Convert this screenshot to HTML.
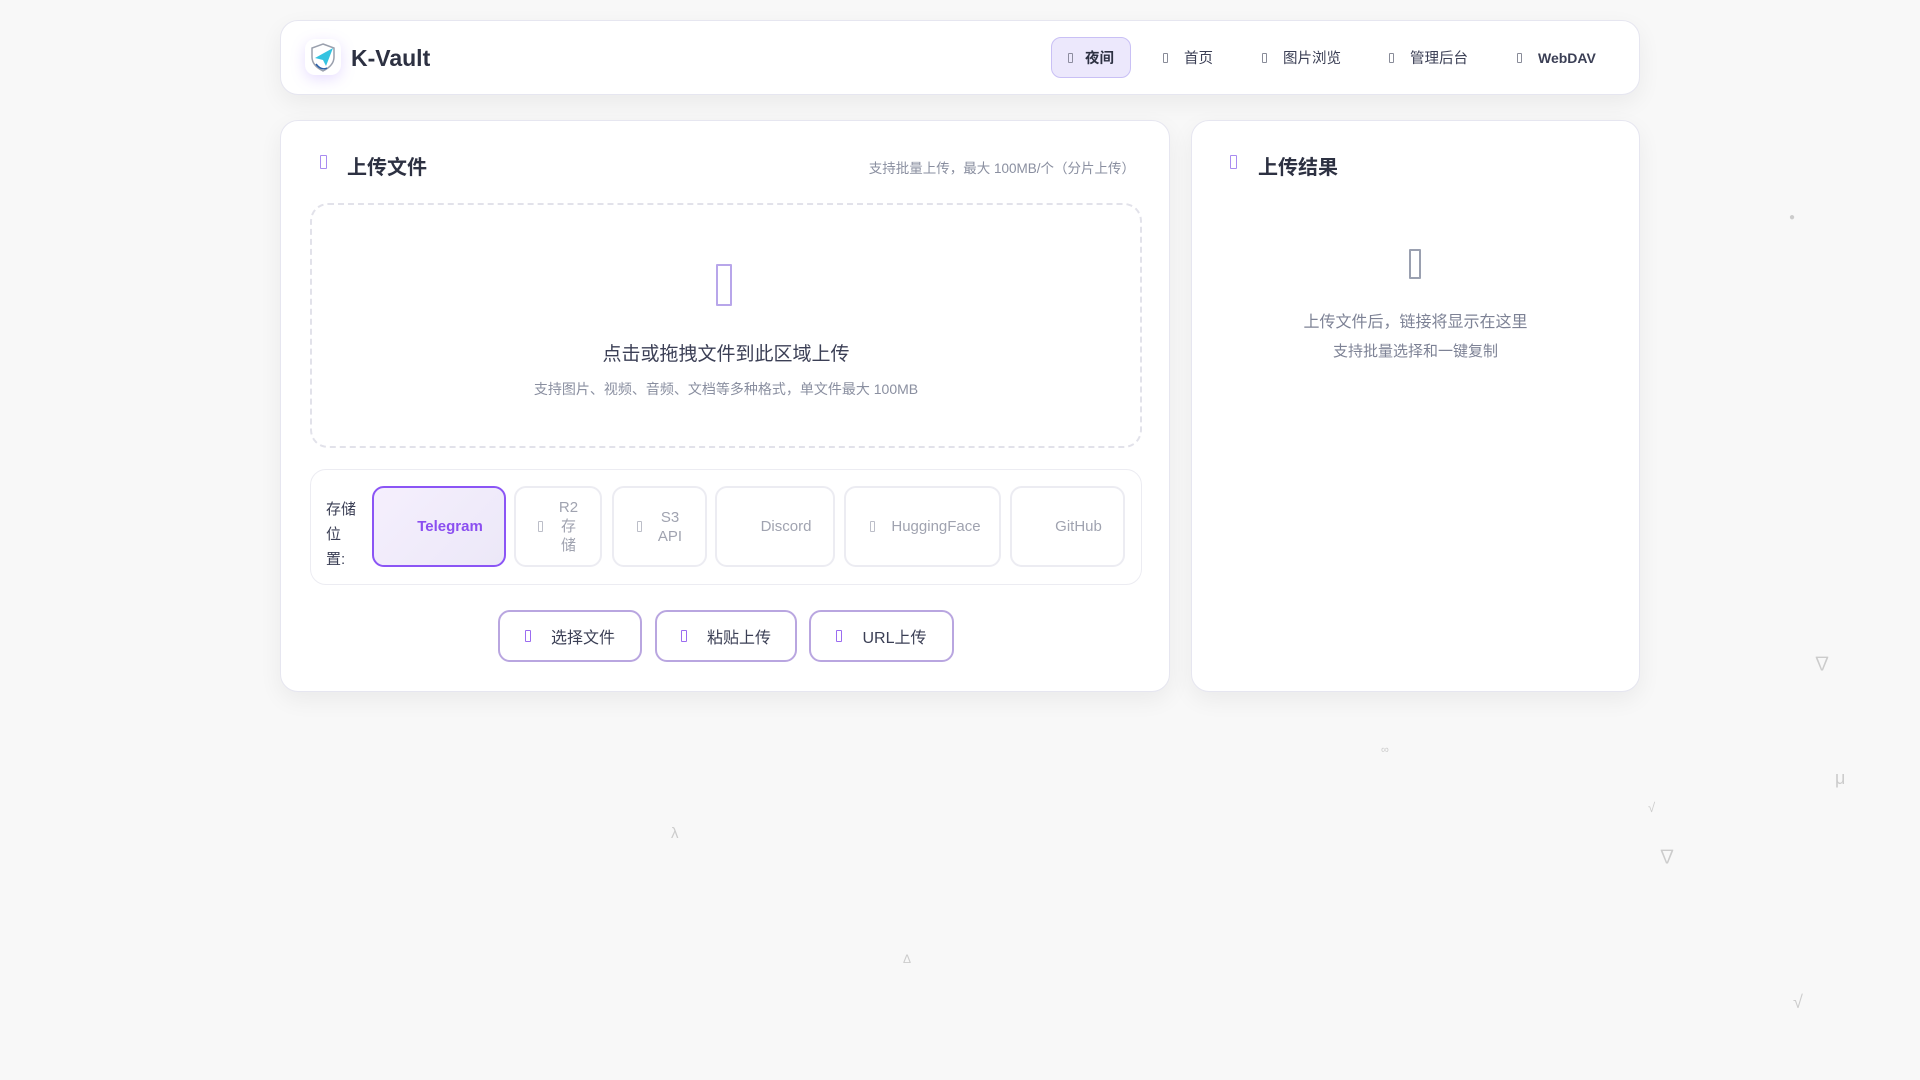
<!DOCTYPE html>
<html><head><meta charset="utf-8"><style>
*{box-sizing:border-box;margin:0;padding:0}
body{width:1920px;height:1080px;background:#f8f8f8;font-family:"Liberation Sans","Noto Sans CJK SC",sans-serif;position:relative;overflow:hidden;color:#2d3142}
.abs{position:absolute}
.card{position:absolute;background:#fff;border:1px solid #e6e6f0;border-radius:18px;box-shadow:0 8px 24px rgba(0,0,0,0.06)}
.tofu{display:inline-block;border:1.5px solid currentColor;border-radius:1px}
.nav{position:absolute;top:37px;height:41px;display:flex;align-items:center;font-size:14.5px;color:#3b3f55}
.nav .tofu{width:5px;height:10px;margin-right:16px;opacity:.6}
.sb{position:absolute;top:486px;height:81px;border:2px solid #ececf2;border-radius:12px;display:flex;align-items:center;justify-content:center;color:#a0a3b0;font-size:15px;text-align:center;line-height:19px}
.sb .tofu{width:5px;height:11px;margin-right:16px;opacity:.7}
.ab{position:absolute;top:610px;height:52px;border:2px solid #b9a6e0;border-radius:12px;display:flex;align-items:center;justify-content:center;font-size:16px;color:#3b3f55;background:#fff}
.ab .tofu{width:6px;height:12px;color:#9b6cf0;margin-right:20px}
.sym{position:absolute;color:#ccc;font-size:18px}
</style></head><body>
<div class="card" style="left:280px;top:20px;width:1360px;height:75px"></div>
<div class="abs" style="left:305px;top:39px;width:36px;height:36px;border-radius:10px;box-shadow:0 4px 14px rgba(160,120,255,.25);background:#fff">
<svg width="36" height="36" viewBox="0 0 36 36"><path d="M18 5 L29 9 V18 C29 25 24 29 18 32 C12 29 7 25 7 18 V9 Z" fill="none" stroke="#9aa0ad" stroke-width="1.5"/><path d="M10 19 L28 9 L21 27 L18 21 Z" fill="#35c3e0"/><path d="M11 25 C14 29 18 31 22 29" fill="none" stroke="#2a5fa8" stroke-width="1.5"/></svg></div>
<div class="abs" style="left:351px;top:45px;font-size:23px;font-weight:bold;color:#2d3142">K-Vault</div>
<div class="nav" style="left:1051px;width:80px;background:#ece8fc;border:1.5px solid #c9c0f5;border-radius:10px;justify-content:center;font-weight:bold;color:#2d3142"><span class="tofu" style="width:5px;height:10px;margin-right:12px;opacity:.5"></span>夜间</div>
<div class="nav" style="left:1163px"><span class="tofu"></span>首页</div>
<div class="nav" style="left:1262px"><span class="tofu"></span>图片浏览</div>
<div class="nav" style="left:1389px"><span class="tofu"></span>管理后台</div>
<div class="nav" style="left:1517px;font-size:14px;font-weight:bold"><span class="tofu"></span>WebDAV</div>

<div class="card" style="left:280px;top:120px;width:890px;height:572px"></div>
<span class="tofu abs" style="left:320px;top:155px;width:7px;height:14px;color:#a98cf0"></span>
<div class="abs" style="left:347px;top:151px;font-size:20px;font-weight:bold">上传文件</div>
<div class="abs" style="right:785px;top:157px;font-size:13.5px;color:#8a8fa0">支持批量上传，最大 100MB/个（分片上传）</div>
<div class="abs" style="left:310px;top:203px;width:832px;height:245px;border:2px dashed #e2e2ea;border-radius:18px"></div>
<span class="tofu abs" style="left:716px;top:264px;width:16px;height:42px;color:#b8a6ea;border-width:2px"></span>
<div class="abs" style="left:310px;width:832px;top:339px;text-align:center;font-size:19px;color:#3b3f55">点击或拖拽文件到此区域上传</div>
<div class="abs" style="left:310px;width:832px;top:379px;text-align:center;font-size:14px;color:#8a8fa0">支持图片、视频、音频、文档等多种格式，单文件最大 100MB</div>
<div class="abs" style="left:310px;top:469px;width:832px;height:116px;border:1.5px solid #ececf2;border-radius:16px;background:#fff"></div>
<div class="abs" style="left:326px;top:497px;font-size:15px;line-height:25px;width:32px;color:#3b3f55">存储位置:</div>
<div class="sb" style="left:372px;width:134px;padding-left:22px;border-color:#8b55f5;background:linear-gradient(135deg,#f5effd,#ece8f8);color:#8b4ff0;font-weight:bold">Telegram</div>
<div class="sb" style="left:514px;width:88px"><span class="tofu"></span>R2<br>存<br>储</div>
<div class="sb" style="left:612px;width:95px"><span class="tofu"></span>S3<br>API</div>
<div class="sb" style="left:715px;width:120px;padding-left:22px">Discord</div>
<div class="sb" style="left:844px;width:157px;padding-left:6px"><span class="tofu"></span>HuggingFace</div>
<div class="sb" style="left:1010px;width:115px;padding-left:22px">GitHub</div>
<div class="ab" style="left:498px;width:144px"><span class="tofu"></span>选择文件</div>
<div class="ab" style="left:655px;width:142px"><span class="tofu"></span>粘贴上传</div>
<div class="ab" style="left:809px;width:145px"><span class="tofu"></span>URL上传</div>

<div class="card" style="left:1191px;top:120px;width:449px;height:572px"></div>
<span class="tofu abs" style="left:1230px;top:155px;width:7px;height:14px;color:#a98cf0"></span>
<div class="abs" style="left:1258px;top:151px;font-size:20px;font-weight:bold">上传结果</div>
<span class="tofu abs" style="left:1409px;top:249px;width:12px;height:30px;color:#9aa0b0;border-width:2px"></span>
<div class="abs" style="left:1191px;width:449px;top:308px;text-align:center;font-size:16px;color:#7d8295">上传文件后，链接将显示在这里</div>
<div class="abs" style="left:1191px;width:449px;top:340px;text-align:center;font-size:15px;color:#7d8295">支持批量选择和一键复制</div>

<div class="sym" style="left:1813px;top:650px">∇</div>
<div class="sym" style="left:1658px;top:843px">∇</div>
<div class="sym" style="left:1835px;top:768px">μ</div>
<div class="sym" style="left:1648px;top:800px;font-size:13px">√</div>
<div class="sym" style="left:1793px;top:992px">√</div>
<div class="sym" style="left:671px;top:825px;font-size:15px">λ</div>
<div class="sym" style="left:903px;top:952px;font-size:12px">Δ</div>
<div class="sym" style="left:1381px;top:744px;font-size:11px">∞</div>
<div class="sym" style="left:1789px;top:212px;font-size:10px">●</div>
</body></html>
